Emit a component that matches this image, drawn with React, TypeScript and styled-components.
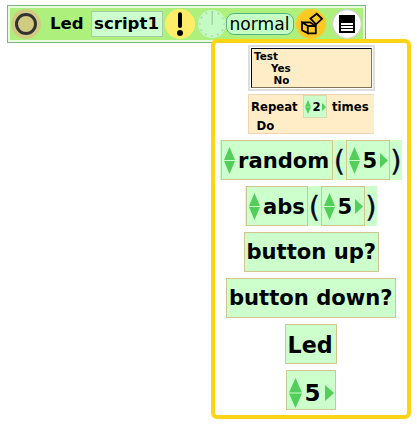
import React from 'react';
import styled, { createGlobalStyle } from 'styled-components';

const Global = createGlobalStyle`
  * { box-sizing: border-box; }
  body { margin: 0; background: #fff; color: #000; overflow: hidden; }
`;

const Page = styled.main`
  width: 417px;
  height: 425px;
  padding: 5px 0 0 7px;
  font-family: 'DejaVu Sans', sans-serif;
`;

const Header = styled.header`
  display: flex;
  align-items: center;
  width: 359px;
  height: 38px;
  border: 1px solid #80b580;
  box-shadow: inset 0 0 0 2px #e6fbe0;
  background: #aef07c;
  padding-left: 3px;
`;

const Icon = styled.svg<{ $gap?: number }>`
  display: block;
  flex: none;
  margin-left: ${(p) => p.$gap ?? 0}px;
`;

const Owner = styled.span`
  width: 41px;
  margin-left: 9px;
  font: bold 16.6px/24px 'DejaVu Sans', sans-serif;
`;

const ScriptName = styled.span`
  width: 72px;
  height: 26px;
  padding-left: 2px;
  border: 1px solid #a6cba6;
  background: #ccffcc;
  font: bold 16.6px/24px 'DejaVu Sans', sans-serif;
`;

const Status = styled.span`
  width: 68px;
  height: 22px;
  padding-left: 2.5px;
  border: 1px solid #55b383;
  border-radius: 8px;
  background: #c4ffc4;
  font: 17.1px/21px 'DejaVu Sans', sans-serif;
`;

const Palette = styled.section`
  position: relative;
  display: flex;
  flex-direction: column;
  align-items: center;
  gap: 6px;
  width: 200px;
  height: 380px;
  margin: -4px 0 0 204px;
  padding-top: 2px;
  border: 4px solid #ffd414;
  border-radius: 6px;
  background: #fff;
`;

const TestFrame = styled.div`
  width: 127px;
  height: 46px;
  margin-bottom: -3px;
  padding: 1px;
  border: 2px solid #dedede;
  background: #fff;
`;

const TestBlock = styled.div`
  height: 40px;
  padding: 1px 0 0 2.5px;
  border: 1px solid #000018;
  border-right-color: #80745f;
  border-bottom-color: #80745f;
  background: #ffedc8;
`;

const TestLine = styled.div<{ $indent: number }>`
  padding-left: ${(p) => p.$indent}px;
  font: bold 10.4px/12px 'DejaVu Sans', sans-serif;
`;

const RepeatBlock = styled.div`
  width: 126px;
  height: 40px;
  padding-left: 2px;
  border: 1px solid #f0d3b0;
  border-right: 0;
  background: #ffedc8;
  font: bold 11.7px/17px 'DejaVu Sans', sans-serif;
`;

const RepeatRow = styled.div`
  display: flex;
  align-items: center;
  height: 23px;
`;

const RepeatWord = styled.span<{ $width: number }>`
  width: ${(p) => p.$width}px;
  padding-top: 1px;
`;

const CountTile = styled.span`
  display: flex;
  align-items: center;
  width: 24px;
  height: 23px;
  margin-right: 5px;
  padding: 1px 0 0 1px;
  border: 1px solid #d6dcae;
  background: #ccffcc;
`;

const DoLine = styled.div`
  padding-left: 5.5px;
`;

const Expression = styled.div<{ $width: number }>`
  display: flex;
  flex: none;
  width: ${(p) => p.$width}px;
  height: 40px;
  padding-left: 1px;
  background: #ccffcc;
`;

const Tile = styled.div<{ $width: number; $pad?: number; $size?: number; $drop?: number }>`
  display: flex;
  flex: none;
  align-items: center;
  width: ${(p) => p.$width}px;
  height: 40px;
  padding-left: ${(p) => p.$pad ?? 2}px;
  padding-top: ${(p) => p.$drop ?? 0}px;
  border: 1px solid #d0c78f;
  background: #ccffcc;
  font: bold ${(p) => p.$size ?? 21.1}px/32px 'DejaVu Sans', sans-serif;
  white-space: nowrap;
`;

const Paren = styled.span<{ $width: number }>`
  flex: none;
  width: ${(p) => p.$width}px;
  text-align: center;
  color: #080824;
  font: 29px/43px 'DejaVu Sans', sans-serif;
  -webkit-text-stroke: 0.3px #080824;
`;

const TileText = styled.span<{ $gap?: number }>`
  margin-left: ${(p) => p.$gap ?? 0}px;
`;

const Arrows = ({ w = 11, h = 27, gap = 0 }: { w?: number; h?: number; gap?: number }) => (
  <Icon width={w} height={h} viewBox="0 0 11 26" preserveAspectRatio="none" $gap={gap}>
    <path d="M5.5 0 L11 12.5 H0Z M0 13.5 H11 L5.5 26Z" fill="#54ce5b" />
  </Icon>
);

const Advance = ({ w = 8, h = 15, gap = 0 }: { w?: number; h?: number; gap?: number }) => (
  <Icon width={w} height={h} viewBox="0 0 8 15" preserveAspectRatio="none" $gap={gap}>
    <path d="M0 0 L8 7.5 L0 15Z" fill="#54ce5b" />
  </Icon>
);

const NumberTile = () => (
  <Tile $width={44} $drop={1}>
    <Arrows />
    <TileText $gap={2.5}>5</TileText>
    <Advance gap={2.5} />
  </Tile>
);

const FunctionTile = ({ name, width, total }: { name: string; width: number; total: number }) => (
  <Expression $width={total}>
    <Tile $width={width} $drop={1}>
      <Arrows />
      <TileText $gap={3}>{name}</TileText>
    </Tile>
    <Paren $width={13}>(</Paren>
    <NumberTile />
    <Paren $width={12}>)</Paren>
  </Expression>
);

export default function App() {
  return (
    <>
      <Global />
      <Page>
        <Header>
          <Icon width="30" height="30" viewBox="0 0 30 30">
            <circle cx="15" cy="15" r="15" fill="#d0cc82" />
            <circle cx="15" cy="15" r="9.5" fill="none" stroke="#333" strokeWidth="3" />
          </Icon>
          <Owner>Led</Owner>
          <ScriptName>script1</ScriptName>
          <Icon width="30" height="30" viewBox="0 0 30 30" $gap={2}>
            <circle cx="15" cy="15" r="15" fill="#ffed68" />
            <path d="M15 5.2V17" stroke="#000" strokeWidth="4" strokeLinecap="round" />
            <circle cx="15" cy="24" r="3" />
          </Icon>
          <Icon width="28" height="28" viewBox="0 0 28 28" $gap={3}>
            <circle cx="14" cy="14" r="14" fill="#c4fbc4" />
            <circle cx="14" cy="14" r="12.2" fill="none" stroke="#a9e0a9" strokeWidth="1.8" strokeDasharray="2 4.388" strokeDashoffset="1" />
            <path d="M14.2 1V15" stroke="#a5cfa5" strokeWidth="1.4" />
          </Icon>
          <Status>normal</Status>
          <Icon width="30" height="30" viewBox="0 0 30 30" $gap={2}>
            <circle cx="15" cy="15" r="15" fill="#ffc923" />
            <g fill="none" stroke="#000" strokeWidth="1.8" strokeLinejoin="miter">
              <path d="M6 13.3 L11.8 17 V24.3 L6 21.3Z M11.8 17H19.8V24.3H11.8Z M6 13.3H14L19.8 17" />
              <path d="M14.5 9.5 L20.8 4.8 L26 9.8 L20 15.3Z" />
            </g>
          </Icon>
          <Icon width="30" height="30" viewBox="0 0 30 30" $gap={6}>
            <circle cx="15" cy="15" r="14.3" fill="#fff" stroke="#d1d1d1" strokeWidth="1.3" />
            <path fill="#000" d="M7 6H23V24H7Z" />
            <path fill="#fff" d="M9 14H21V16H9Z M9 17H21V19H9Z M9 20H21V22H9Z" />
          </Icon>
        </Header>
        <Palette>
          <TestFrame>
            <TestBlock>
              <TestLine $indent={0}>Test</TestLine>
              <TestLine $indent={17}>Yes</TestLine>
              <TestLine $indent={19.5}>No</TestLine>
            </TestBlock>
          </TestFrame>
          <RepeatBlock>
            <RepeatRow>
              <RepeatWord $width={52}>Repeat</RepeatWord>
              <CountTile>
                <Arrows w={6} h={14} />
                <TileText $gap={1.5}>2</TileText>
                <Advance w={4} h={8} gap={1} />
              </CountTile>
              <RepeatWord $width={38}>times</RepeatWord>
            </RepeatRow>
            <DoLine>Do</DoLine>
          </RepeatBlock>
          <FunctionTile name="random" width={112} total={182} />
          <FunctionTile name="abs" width={62} total={132} />
          <Tile $width={135}>button up?</Tile>
          <Tile $width={170}>button down?</Tile>
          <Tile $width={52} $pad={1.5} $size={22.2} $drop={2}>Led</Tile>
          <Tile $width={50} $size={23} $drop={6}>
            <Arrows w={13} h={30} />
            <TileText $gap={2.5}>5</TileText>
            <Advance w={9} h={16} gap={4} />
          </Tile>
        </Palette>
      </Page>
    </>
  );
}
